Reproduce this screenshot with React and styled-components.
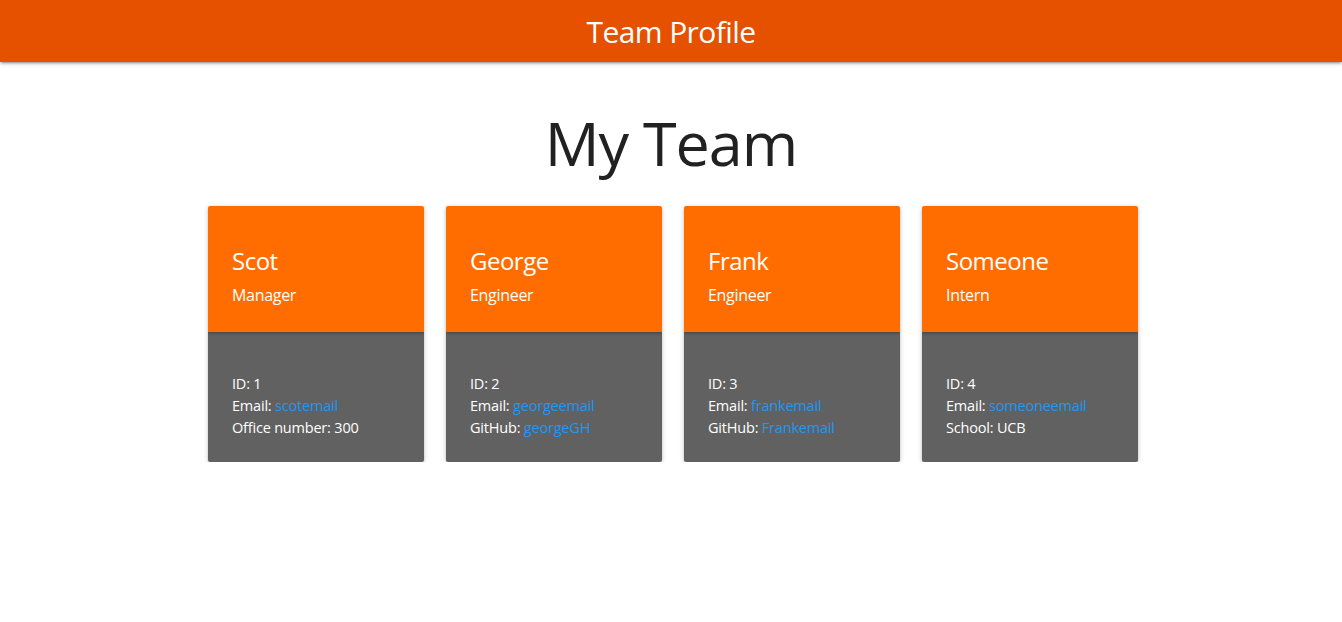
import React from "react";
import styled, { createGlobalStyle } from "styled-components";

const team = [
    { name: "Scot", role: "Manager", id: 1, email: "scotemail", extra: { label: "Office number", value: "300" } },
    { name: "George", role: "Engineer", id: 2, email: "georgeemail", extra: { label: "GitHub", value: "georgeGH", link: true } },
    { name: "Frank", role: "Engineer", id: 3, email: "frankemail", extra: { label: "GitHub", value: "Frankemail", link: true } },
    { name: "Someone", role: "Intern", id: 4, email: "someoneemail", extra: { label: "School", value: "UCB" } },
];

export default function App() {
    return (
        <>
            <GlobalStyle />
            <Nav>
                <Brand>Team Profile</Brand>
            </Nav>
            <Main>
                <Heading>My Team</Heading>
                <CardRow>
                    {team.map(member => (
                        <Card key={member.id}>
                            <CardTop>
                                <Name>{member.name}</Name>
                                <Role>{member.role}</Role>
                            </CardTop>
                            <CardBody>
                                <Line>ID: {member.id}</Line>
                                <Line>
                                    Email: <Link href="#">{member.email}</Link>
                                </Line>
                                <Line>
                                    {member.extra.label}:{" "}
                                    {member.extra.link ? (
                                        <Link href="#">{member.extra.value}</Link>
                                    ) : (
                                        member.extra.value
                                    )}
                                </Line>
                            </CardBody>
                        </Card>
                    ))}
                </CardRow>
            </Main>
        </>
    );
}

//------스타일 컴포넌트------
const GlobalStyle = createGlobalStyle`
    body {
        margin: 0;
        background: #fff;
        font-family: "Open Sans", "Noto Sans", sans-serif;
        color: rgba(0, 0, 0, 0.87);
    }
`;

const Nav = styled.nav`
    height: 62px;
    background: #e65100;
    display: flex;
    align-items: center;
    justify-content: center;
    box-shadow: 0 2px 2px 0 rgba(0, 0, 0, 0.14), 0 3px 1px -2px rgba(0, 0, 0, 0.12),
        0 1px 5px 0 rgba(0, 0, 0, 0.2);
`;

const Brand = styled.div`
    color: #fff;
    font-size: 30px;
    letter-spacing: -0.6px;
    line-height: 1;
    padding-top: 2px;
`;

const Main = styled.main`
    display: flex;
    flex-direction: column;
    align-items: center;
`;

const Heading = styled.h1`
    margin: 44px 0 26px;
    font-size: 61px;
    font-weight: 400;
    line-height: 74px;
    letter-spacing: -1px;
    color: #212121;
`;

const CardRow = styled.div`
    display: grid;
    grid-template-columns: repeat(4, 216px);
    gap: 22px;
    margin-left: 4px;
`;

const Card = styled.div`
    border-radius: 2px;
    overflow: hidden;
    box-shadow: 0 2px 2px 0 rgba(0, 0, 0, 0.14), 0 3px 1px -2px rgba(0, 0, 0, 0.12),
        0 1px 5px 0 rgba(0, 0, 0, 0.2);
`;

const CardTop = styled.div`
    height: 126px;
    box-sizing: border-box;
    background: #ff6d00;
    color: #fff;
    padding: 39px 24px 0;
    position: relative;
    box-shadow: 0 2px 2px rgba(0, 0, 0, 0.2);
    z-index: 1;
`;

const Name = styled.div`
    font-size: 24px;
    line-height: 32px;
    letter-spacing: -0.5px;
`;

const Role = styled.div`
    margin-top: 7px;
    font-size: 16px;
    line-height: 22px;
    letter-spacing: -0.3px;
`;

const CardBody = styled.div`
    height: 130px;
    box-sizing: border-box;
    background: #616161;
    color: #fff;
    padding: 41px 24px 0;
`;

const Line = styled.div`
    font-size: 14.5px;
    line-height: 22px;
    letter-spacing: -0.2px;
`;

const Link = styled.a`
    color: #2196f3;
    text-decoration: none;
`;
